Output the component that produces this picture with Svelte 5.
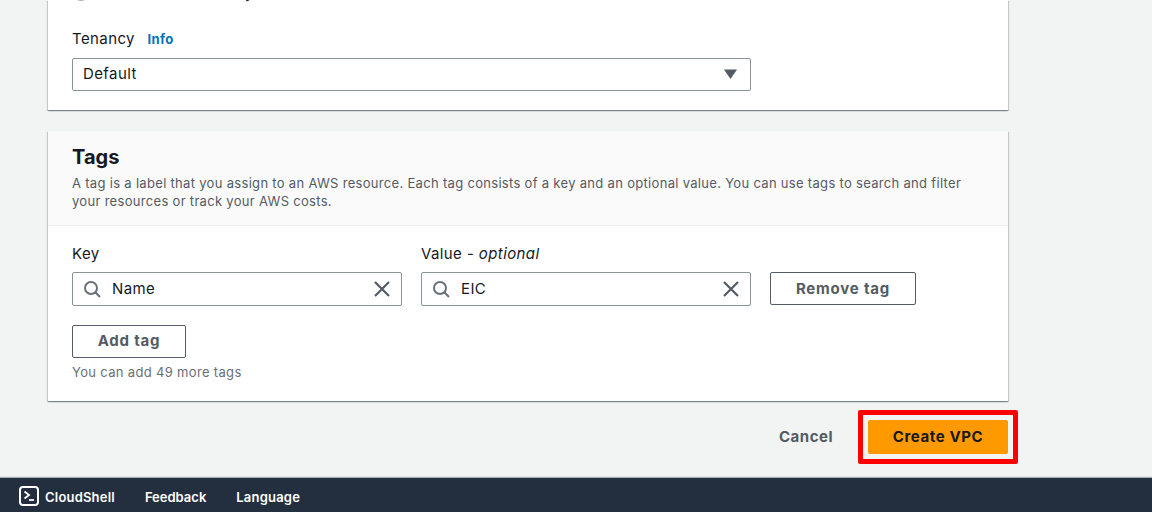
<script>
	let tags = [{label: 'Key', value: 'Name'}, {label: 'Value', optional: true, value: 'EIC'}]
</script>

<div class="page">
	<main class="content">
		<section class="card first">
			<div class="radio-row">
				<span class="radio"></span>
				<span>IPv6 CIDR owned by me</span>
			</div>
			<div class="field-label tenancy-label">Tenancy <a class="info" href="#info">Info</a></div>
			<div class="select">
				<span>Default</span>
				<svg width="13" height="10" viewBox="0 0 13 10"><path d="M0 0.500h13L6.500 10z" fill="#545b64" /></svg>
			</div>
		</section>

		<section class="card tags">
			<header class="card-head">
				<h2>Tags</h2>
				<p>A tag is a label that you assign to an AWS resource. Each tag consists of a key and an optional value. You can use tags to search and filter your resources or track your AWS costs.</p>
			</header>
			<div class="card-body">
				<div class="tag-row">
					{#each tags as tag}
						<div class="tag-field">
							<div class="field-label">{tag.label}{#if tag.optional}&nbsp;- <i>optional</i>{/if}</div>
							<div class="search">
								<svg class="glass" width="18" height="18" viewBox="0 0 18 18" fill="none" stroke="#687078" stroke-width="2"><circle cx="8" cy="8" r="6" /><path d="M12.300 12.300L17 17" /></svg>
								<span class="search-value">{tag.value}</span>
								<svg width="18" height="18" viewBox="0 0 18 18" fill="none" stroke="#545b64" stroke-width="2.200"><path d="M2 2l14 14M16 2L2 16" /></svg>
							</div>
						</div>
					{/each}
					<button class="btn remove">Remove tag</button>
				</div>
				<button class="btn add">Add tag</button>
				<div class="hint">You can add 49 more tags</div>
			</div>
		</section>

		<div class="actions">
			<button class="cancel">Cancel</button>
			<div class="highlight"><button class="primary">Create VPC</button></div>
		</div>
	</main>

	<footer class="bar">
		<span class="bar-item shell">
			<svg width="20" height="20" viewBox="0 0 20 20" fill="none" stroke="#fff"><rect x="1" y="1" width="18" height="18" rx="3" stroke-width="2" /><path d="M5.500 5.500L10 9l-4.500 3.500" stroke-width="1.800" /><path d="M10 14h5" stroke-width="1.800" /></svg>
			CloudShell
		</span>
		<span class="bar-item">Feedback</span>
		<span class="bar-item lang">Language</span>
	</footer>
</div>

<style>
:global(body) {
	margin: 0;
	background: #f2f3f3;
}

.page {
	width: 1152px;
	height: 512px;
	display: flex;
	flex-direction: column;
	overflow: hidden;
	font-family: Inter, sans-serif;
	font-size: 15px;
	letter-spacing: 0.4px;
	color: #16191f;
}

.content {
	flex: 1;
	min-height: 0;
	padding-left: 48px;
	width: 960px;
}

.card {
	display: flow-root;
	background: #fff;
	box-shadow: 0 1px 1px 0 rgba(0, 28, 36, 0.3), 1px 1px 1px 0 rgba(0, 28, 36, 0.15), -1px 1px 1px 0 rgba(0, 28, 36, 0.15);
}

.first {
	padding-bottom: 19px;
}

.radio-row {
	height: 16px;
	margin-top: -15px;
	padding-left: 25px;
	display: flex;
	align-items: center;
	gap: 13px;
	line-height: 16px;
}

.radio {
	width: 16px;
	height: 16px;
	border: 2px solid #aab7b8;
	border-radius: 50%;
	box-sizing: border-box;
}

.field-label {
	line-height: 22px;
}

.tenancy-label {
	padding: 27px 0 0 24px;
}

.info {
	margin-left: 8px;
	font-size: 13px;
	font-weight: 700;
	color: #0073bb;
	text-decoration: none;
}

.select {
	margin: 8px 257px 0 24px;
	height: 33px;
	box-sizing: border-box;
	padding: 0 13px 2px 10px;
	border: 1px solid #879596;
	border-radius: 2px;
	display: flex;
	align-items: center;
	justify-content: space-between;
}

.tags {
	margin-top: 21px;
}

.card-head {
	background: #fafafa;
	border-bottom: 1px solid #eaeded;
	padding: 13px 24px 15px;
}

h2 {
	margin: 0 0 4px;
	font-size: 20px;
	line-height: 26px;
	font-weight: 700;
	letter-spacing: 0;
}

p {
	margin: 0;
	font-size: 13px;
	letter-spacing: 0.31px;
	line-height: 18px;
	color: #545b64;
}

.card-body {
	padding: 17px 24px 20px;
}

.tag-row {
	display: flex;
	align-items: flex-end;
	gap: 19px;
}

.tag-field {
	width: 330px;
}

.tag-field .field-label {
	margin-bottom: 7px;
}

.search {
	height: 34px;
	box-sizing: border-box;
	border: 1px solid #879596;
	border-radius: 2px;
	padding: 0 10px;
	display: flex;
	align-items: center;
}

.search-value {
	flex: 1;
	margin-left: 11px;
	margin-top: -2px;
}

.btn {
	font: inherit;
	font-weight: 700;
	letter-spacing: 0.8px;
	background: #fff;
	color: #545b64;
	border: 1px solid #545b64;
	border-radius: 2px;
	padding: 0;
	height: 33px;
}

.remove {
	width: 146px;
	margin-bottom: 1px;
}

.add {
	display: block;
	width: 114px;
	margin-top: 19px;
	padding-bottom: 2px;
}

.hint {
	margin-top: 5px;
	font-size: 13px;
	letter-spacing: 0.33px;
	line-height: 18px;
	color: #687078;
}

.actions {
	display: flex;
	justify-content: flex-end;
	align-items: center;
	gap: 25px;
	margin-top: 9px;
	margin-right: -10px;
}

.cancel {
	font: inherit;
	font-weight: 700;
	letter-spacing: 0.5px;
	color: #545b64;
	background: none;
	border: 0;
	padding: 0 0 2px;
}

.highlight {
	border: 5px solid #ff0000;
	border-radius: 2px;
	padding: 5px;
	display: flex;
}

.primary {
	font: inherit;
	font-weight: 700;
	letter-spacing: 0.6px;
	width: 140px;
	height: 34px;
	padding: 0 0 2px;
	border: 0;
	border-radius: 2px;
	background: #ff9900;
	color: #16191f;
}

.bar {
	height: 34px;
	box-sizing: border-box;
	flex: none;
	background: #232f3e;
	display: flex;
	align-items: center;
	gap: 30px;
	padding: 3px 0 0 19px;
	color: #fff;
	font-size: 13px;
	letter-spacing: 0;
	font-weight: 600;
	box-shadow: 0 -1px 1px rgba(0, 28, 36, 0.3);
}

.shell {
	display: flex;
	align-items: center;
	gap: 6px;
	letter-spacing: 0.2px;
}

.shell svg {
	margin-top: -1px;
}

.lang {
	letter-spacing: 0.2px;
}
</style>
